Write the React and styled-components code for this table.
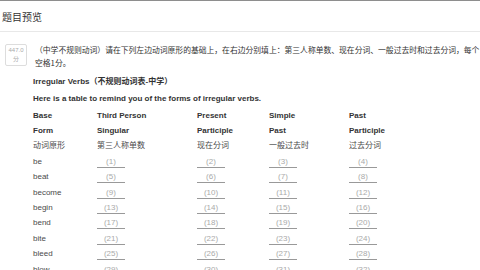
import React from 'react'
import styled, { createGlobalStyle } from 'styled-components'

const GlobalStyle = createGlobalStyle`
  html, body {
    margin: 0;
    padding: 0;
    background: #fff;
    overflow: hidden;
  }
  body {
    font-family: "Liberation Sans", "Noto Sans CJK SC", sans-serif;
    color: #333;
  }
`

const Modal = styled.div({
    width: '480px',
    height: '270px',
    borderTop: '1px solid #8e8e8e',
    boxSizing: 'border-box',
    overflow: 'hidden'
})

const Header = styled.div({
    height: '30px',
    display: 'flex',
    alignItems: 'center',
    padding: '0 2px',
    borderBottom: '1px solid #e8e8e8'
})

const Title = styled.h3({
    margin: 0,
    fontSize: '10px',
    fontWeight: 'normal',
    color: '#333',
    fontFamily: '"Noto Sans CJK SC", sans-serif'
})

const Body = styled.div({
    display: 'flex',
    alignItems: 'flex-start',
    padding: '11px 0 0 5px',
    gap: '8px'
})

const Score = styled.div({
    width: '20px',
    height: '20px',
    border: '1px solid #ddd',
    borderRadius: '2px',
    display: 'flex',
    flexDirection: 'column',
    alignItems: 'center',
    justifyContent: 'center',
    fontSize: '6px',
    lineHeight: '9px',
    color: '#aaa',
    flexShrink: 0,
    marginTop: '1px'
})

const Content = styled.div({
    width: '452px',
    flexShrink: 0
})

const Intro = styled.p({
    margin: 0,
    fontSize: '7.8px',
    lineHeight: '13px',
    color: '#333',
    fontFamily: '"Noto Sans CJK SC", sans-serif'
})

const Heading = styled.p({
    margin: props => props.top,
    fontSize: '8px',
    lineHeight: '12px',
    fontWeight: 'bold',
    color: '#333',
    marginLeft: '-2px'
})

const Table = styled.div({
    display: 'grid',
    gridTemplateColumns: '64px 100px 72px 80px 80px',
    gridAutoRows: '15.4px',
    marginLeft: '-2px',
    marginTop: '3px',
    alignItems: 'center'
})

const Cell = styled.div({
    fontSize: '8px',
    lineHeight: '12px',
    fontWeight: props => (props.bold ? 'bold' : 'normal'),
    color: props => (props.bold ? '#333' : '#4a4a4a'),
    whiteSpace: 'nowrap'
})

const Blank = styled.span({
    display: 'inline-block',
    width: '28px',
    textAlign: 'center',
    borderBottom: '1px solid #999',
    color: '#aaa',
    fontSize: '8px',
    lineHeight: '10px'
})

const headRows = [
    ['Base', 'Third Person', 'Present', 'Simple', 'Past'],
    ['Form', 'Singular', 'Participle', 'Past', 'Participle']
]

const cnRow = ['动词原形', '第三人称单数', '现在分词', '一般过去时', '过去分词']

const verbs = ['be', 'beat', 'become', 'begin', 'bend', 'bite', 'bleed', 'blow']

const App = () => {
    return (
        <>
            <GlobalStyle />
            <Modal>
                <Header>
                    <Title>题目预览</Title>
                </Header>
                <Body>
                    <Score>
                        <span>447.0</span>
                        <span>分</span>
                    </Score>
                    <Content>
                        <Intro>
                            （中学不规则动词）请在下列左边动词原形的基础上，在右边分别填上：第三人称单数、现在分词、一般过去时和过去分词，每个空格1分。
                        </Intro>
                        <Heading top="7px 0 0">Irregular Verbs（不规则动词表-中学）</Heading>
                        <Heading top="5px 0 0">Here is a table to remind you of the forms of irregular verbs.</Heading>
                        <Table>
                            {headRows.map(row =>
                                row.map((text, i) => <Cell bold key={text + i}>{text}</Cell>)
                            )}
                            {cnRow.map(text => <Cell key={text}>{text}</Cell>)}
                            {verbs.map((verb, r) => (
                                <React.Fragment key={verb}>
                                    <Cell>{verb}</Cell>
                                    {[1, 2, 3, 4].map(n => (
                                        <Cell key={n}>
                                            <Blank>({r * 4 + n})</Blank>
                                        </Cell>
                                    ))}
                                </React.Fragment>
                            ))}
                        </Table>
                    </Content>
                </Body>
            </Modal>
        </>
    )
}

export default App
